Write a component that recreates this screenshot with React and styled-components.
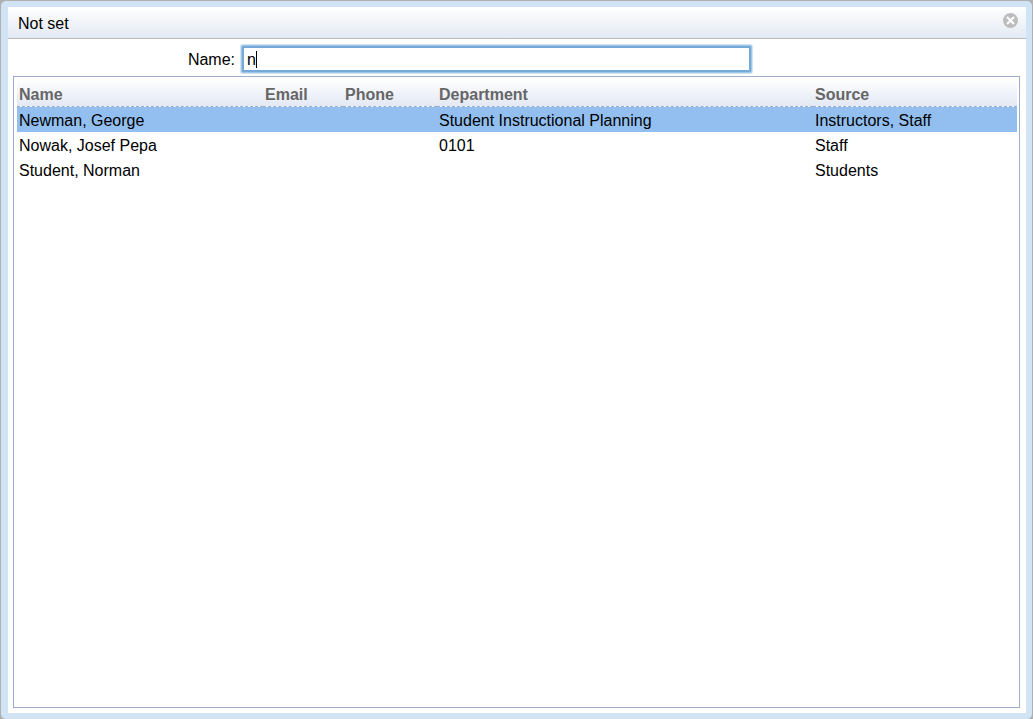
import React, { useState } from "react";
import styled, { createGlobalStyle } from "styled-components";

const columns = [
  { key: "name", label: "Name", width: "24.6%" },
  { key: "email", label: "Email", width: "8%" },
  { key: "phone", label: "Phone", width: "9.4%" },
  { key: "department", label: "Department", width: "37.6%" },
  { key: "source", label: "Source", width: "20.4%" },
];

const people = [
  {
    name: "Newman, George",
    department: "Student Instructional Planning",
    source: "Instructors, Staff",
  },
  { name: "Nowak, Josef Pepa", department: "0101", source: "Staff" },
  { name: "Student, Norman", source: "Students" },
];

const App = () => {
  const [query, setQuery] = useState("n");
  const [selected, setSelected] = useState(0);

  return (
    <>
      <GlobalStyle />
      <Backdrop>
        <Frame>
          <Dialog>
            <TitleBar>
              <Title>Not set</Title>
              <CloseButton type="button" aria-label="Close">
                <svg width="15" height="15" viewBox="0 0 15 15">
                  <circle cx="7.5" cy="7.5" r="7.5" fill="#bcbcbc" />
                  <path
                    d="M4 4 L11 11 M11 4 L4 11"
                    stroke="#fff"
                    strokeWidth="2.2"
                  />
                </svg>
              </CloseButton>
            </TitleBar>

            <SearchRow>
              <Label htmlFor="name">Name:</Label>
              <InputWrapper>
                <Input
                  id="name"
                  type="text"
                  autoComplete="off"
                  value={query}
                  onChange={(e) => setQuery(e.target.value)}
                />
                {query === "n" && <Caret />}
              </InputWrapper>
            </SearchRow>

            <Results>
              <Table>
                <thead>
                  <tr>
                    {columns.map((col) => (
                      <HeadCell key={col.key} $width={col.width}>
                        {col.label}
                      </HeadCell>
                    ))}
                  </tr>
                </thead>
                <tbody>
                  {people.map((person, i) => (
                    <Row
                      key={person.name}
                      $selected={i === selected}
                      onMouseOver={() => setSelected(i)}
                    >
                      {columns.map((col) => (
                        <Cell key={col.key}>{person[col.key]}</Cell>
                      ))}
                    </Row>
                  ))}
                </tbody>
              </Table>
            </Results>
          </Dialog>
        </Frame>
      </Backdrop>
    </>
  );
};

export default App;

const GlobalStyle = createGlobalStyle`
  * {
    box-sizing: border-box;
  }
  body {
    margin: 0;
    font-family: "Liberation Sans", Arial, sans-serif;
    font-size: 16px;
    color: #000;
  }
`;

const Backdrop = styled.div`
  display: flex;
  min-height: 100vh;
  padding: 1px 1px 0;
  background: #b1b0b1;
`;

const Frame = styled.div`
  display: flex;
  flex: 1;
  padding: 6px 6px 6px 7px;
  border-radius: 5px;
  background: #d0e4f6;
`;

const Dialog = styled.div`
  display: flex;
  flex: 1;
  flex-direction: column;
  background: #fff;
`;

const TitleBar = styled.div`
  display: flex;
  align-items: center;
  justify-content: space-between;
  height: 32px;
  padding: 0 8px 0 10px;
  border-bottom: 1px solid #bbb;
  background: linear-gradient(#fff, #e3e8f3);
`;

const Title = styled.h1`
  margin: 0;
  padding-top: 2px;
  font-size: 16px;
  font-weight: normal;
`;

const CloseButton = styled.button`
  display: flex;
  padding: 0 0 4px;
  border: none;
  background: none;
  cursor: pointer;
`;

const SearchRow = styled.div`
  display: grid;
  grid-template-columns: 227px 50%;
  column-gap: 7px;
  align-items: center;
  padding: 7px 0 4px;
`;

const Label = styled.label`
  padding-top: 2px;
  text-align: right;
`;

const InputWrapper = styled.div`
  display: flex;
  position: relative;
`;

const Input = styled.input`
  width: 100%;
  height: 26px;
  padding: 2px 3px 0;
  border: 2px solid #75a9d7;
  outline: none;
  border-radius: 1px;
  box-shadow: 0 0 0 1px #a0c6e8, 0 0 0 2px #cfe3f5;
  background: #fff;
  font: inherit;
  caret-color: transparent;
`;

/* text cursor after the typed letter */
const Caret = styled.span`
  position: absolute;
  top: 5px;
  left: 14px;
  width: 1px;
  height: 17px;
  background: #000;
`;

const Results = styled.div`
  flex: 1;
  margin: 0 6px 5px 5px;
  padding: 2px 2px 2px 3px;
  border: 1px solid #9caecb;
`;

const Table = styled.table`
  width: 100%;
  border-collapse: separate;
  border-spacing: 0;
  table-layout: fixed;
`;

const HeadCell = styled.th`
  width: ${({ $width }) => $width};
  height: 28px;
  padding: 4px 2px 0;
  border-bottom: 1px dashed #9caecb;
  background: linear-gradient(#fff, #e3e8f3) padding-box;
  color: #666;
  text-align: left;
`;

const Row = styled.tr`
  background: ${({ $selected }) => ($selected ? "#92bff0" : "#fff")};
  cursor: pointer;
`;

const Cell = styled.td`
  height: 25px;
  padding: 2px 2px 0;
`;
